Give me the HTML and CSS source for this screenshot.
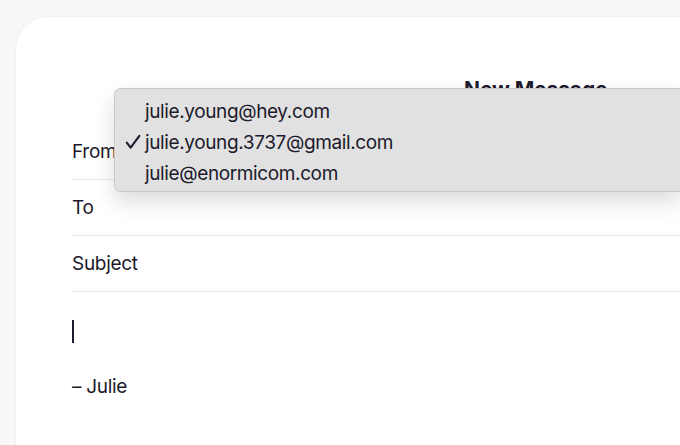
FILE: index.html
```html
<!DOCTYPE html>
<html lang="en">
<head>
<meta charset="utf-8">
<title>New Message</title>
<link rel="stylesheet" href="styles.css">
</head>
<body>
<div class="card">
  <div class="title">New Message</div>
  <div class="fields">
    <div class="field">From</div>
    <div class="field">To</div>
    <div class="field">Subject</div>
  </div>
  <div class="body">
    <div class="cursor"></div>
    <div class="sig">– Julie</div>
  </div>
</div>
<div class="menu">
  <div class="item">julie.young@hey.com</div>
  <div class="item checked"><svg class="check" width="16" height="16" viewBox="0 0 16 16"><path d="M1.8 8.6 L5.6 13.6 L14.4 1.8" fill="none" stroke="#1c1a2b" stroke-width="2.1" stroke-linecap="round" stroke-linejoin="round"/></svg>julie.young.3737@gmail.com</div>
  <div class="item">julie@enormicom.com</div>
</div>
</body>
</html>
```

FILE: styles.css
```css
html, body {
  margin: 0;
  padding: 0;
}
body {
  width: 680px;
  height: 445px;
  overflow: hidden;
  background: #f8f7f7;
  font-family: Inter, "Noto Sans", sans-serif;
  color: #1c1a2b;
  position: relative;
}
.card {
  margin: 17px 0 0 16px;
  width: 664px;
  height: 428px;
  background: #ffffff;
  border-top-left-radius: 32px;
  box-shadow: 0 0 0 1px #f1efef;
  padding: 60px 0 0 56px;
  box-sizing: border-box;
}
.title {
  padding-left: 392px;
  font-size: 21px;
  font-weight: 700;
  line-height: 26px;
  height: 47px;
  white-space: nowrap;
  letter-spacing: -0.1px;
}
.fields {
  display: flex;
  flex-direction: column;
}
.field {
  height: 56px;
  display: flex;
  align-items: center;
  font-size: 19px;
  letter-spacing: -0.3px;
  border-bottom: 1px solid #e6e5e5;
  box-sizing: border-box;
}
.body {
  padding-top: 28px;
}
.cursor {
  width: 2px;
  height: 23px;
  background: #1c1a2b;
}
.sig {
  margin-top: 32px;
  font-size: 19px;
  letter-spacing: -0.3px;
  line-height: 24px;
}
.menu {
  position: absolute;
  left: 114px;
  top: 88px;
  width: 566px;
  height: 104px;
  box-sizing: border-box;
  padding: 7px 0 0 30px;
  background: #e1e1e1;
  border: 1px solid #c9c9c9;
  border-right: none;
  border-radius: 7px 0 0 7px;
  box-shadow: 0 10px 22px rgba(0,0,0,0.14);
}
.item {
  position: relative;
  height: 31px;
  line-height: 31px;
  font-size: 19px;
  letter-spacing: -0.38px;
  color: #1c1a2b;
  white-space: nowrap;
}
.check {
  position: absolute;
  left: -20px;
  top: 7px;
}
```
